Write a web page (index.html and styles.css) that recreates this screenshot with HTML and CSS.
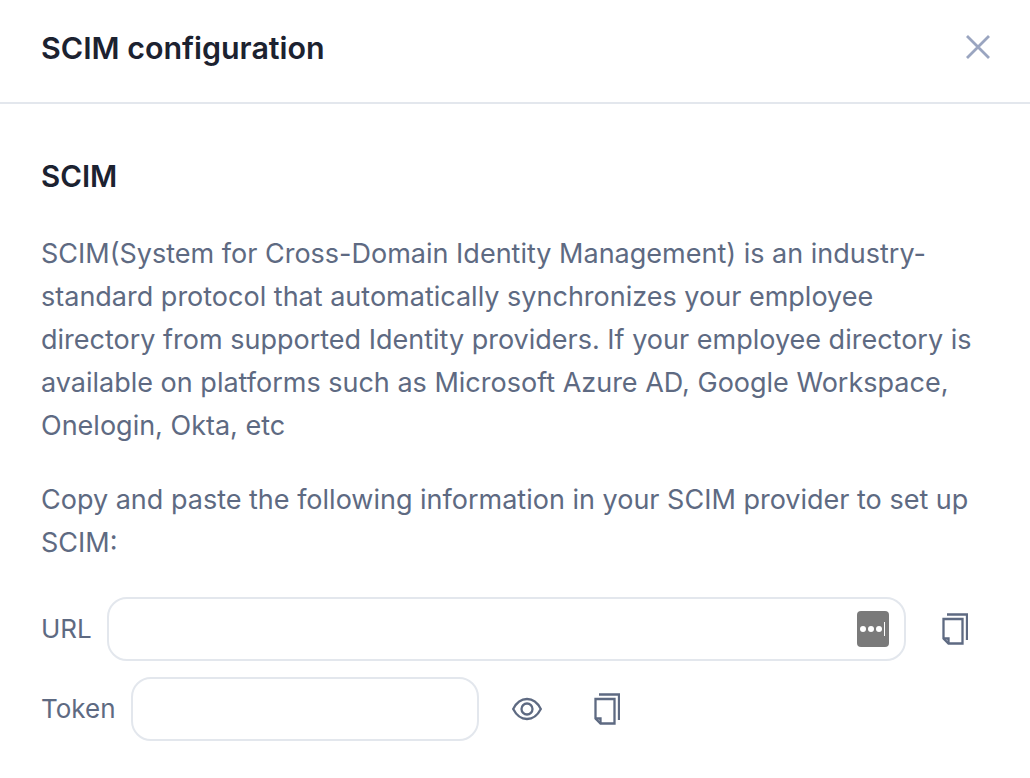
FILE: index.html
```html
<!DOCTYPE html>
<html lang="en">
<head>
  <meta charset="UTF-8" />
  <title>SCIM configuration</title>
  <link rel="stylesheet" href="styles.css">
</head>
<body>
  <header class="modal-header">
    <h1>SCIM configuration</h1>
    <svg class="close-icon" width="24" height="24" viewBox="0 0 24 24" aria-label="Close">
      <path d="M1 1 23 23M23 1 1 23" />
    </svg>
  </header>

  <main class="modal-body">
    <h2>SCIM</h2>
    <p class="intro">SCIM(System for Cross-Domain Identity Management) is an industry-standard protocol that automatically synchronizes your employee directory from supported Identity providers. If your employee directory is available on platforms such as Microsoft Azure AD, Google Workspace, Onelogin, Okta, etc</p>
    <p class="hint">Copy and paste the following information in your SCIM provider to set up SCIM:</p>

    <div class="field-row">
      <label>URL</label>
      <div class="input input-url">
        <span class="pw-key"><i></i><i></i><i></i><b></b></span>
      </div>
      <svg class="icon copy-url" width="26" height="32" viewBox="0 0 26 32">
        <path d="M5 1.500H25V27" />
        <path d="M1.500 6H20.500V30.500H6.500L1.500 25.500Z" />
        <path d="M1.500 25.500H6.500V30.500" />
      </svg>
    </div>

    <div class="field-row">
      <label>Token</label>
      <div class="input input-token"></div>
      <svg class="icon eye" width="30" height="24" viewBox="0 0 30 24">
        <path d="M1.200 12C4.500 5.500 9.300 2 15 2S25.500 5.500 28.800 12C25.500 18.500 20.700 22 15 22S4.500 18.500 1.200 12Z" />
        <circle cx="15" cy="12" r="5.500" />
      </svg>
      <svg class="icon copy-token" width="26" height="32" viewBox="0 0 26 32">
        <path d="M5 1.500H25V27" />
        <path d="M1.500 6H20.500V30.500H6.500L1.500 25.500Z" />
        <path d="M1.500 25.500H6.500V30.500" />
      </svg>
    </div>
  </main>
</body>
</html>
```

FILE: styles.css
```css
/* Modal page layout */
body {
  font-family: Inter, 'Open Sans', sans-serif;
  background-color: #ffffff;
  color: #5e6a82;
  margin: 0;
}

.modal-header {
  display: flex;
  justify-content: space-between;
  align-items: center;
  height: 102px;
  padding: 0 40px 0 41px;
  border-bottom: 2px solid #e3e7ed;
}

h1 {
  margin: 0 0 6px;
  font-size: 30.4px;
  font-weight: 600;
  color: #1c2230;
}

.close-icon {
  margin-bottom: 8px;
  fill: none;
  stroke: #9aa5c0;
  stroke-width: 2.8;
}

.modal-body {
  padding: 53px 41px 0;
}

h2 {
  margin: 0 0 37px;
  font-size: 29.5px;
  line-height: 38px;
  font-weight: 600;
  color: #1c2230;
}

p {
  font-size: 27px;
  line-height: 43px;
}

.intro {
  margin: 0 0 31px;
}

.hint {
  margin: 0 0 33px;
}

.field-row {
  display: flex;
  align-items: center;
  margin-bottom: 16px;
}

label {
  font-size: 26px;
  margin: 0 15px 2px 0;
}

.input {
  display: flex;
  align-items: center;
  justify-content: flex-end;
  box-sizing: border-box;
  height: 64px;
  border: 2px solid #e3e7ed;
  border-radius: 20px;
}

.input-url {
  width: 799px;
  padding-right: 15px;
}

.input-token {
  width: 348px;
}

.pw-key {
  display: flex;
  align-items: center;
  justify-content: center;
  gap: 2px;
  width: 32px;
  height: 36px;
  background-color: #7a7a7a;
  border-radius: 4px;
}

.pw-key i {
  width: 6px;
  height: 6px;
  background-color: #ffffff;
  border-radius: 50%;
}

.pw-key b {
  width: 1px;
  height: 14px;
  background-color: #ffffff;
}

.icon {
  fill: none;
  stroke: #5e6a82;
  stroke-width: 2.3;
}

.copy-url {
  margin-left: 36px;
}

.eye {
  margin-left: 33px;
}

.copy-token {
  margin-left: 52px;
}
```
